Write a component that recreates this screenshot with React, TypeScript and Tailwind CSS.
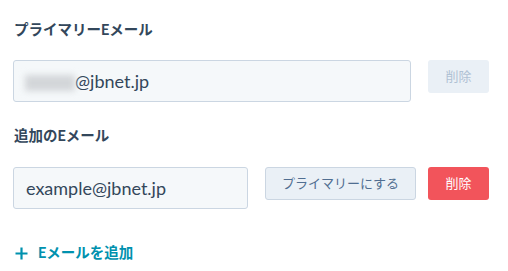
import React from "react";

const font = { fontFamily: "Lato, 'Noto Sans CJK JP', sans-serif" };

export default function App() {
  return (
    <div
      className="w-[508px] h-[271px] bg-white text-[#33475b] pl-[13px] pt-[20px]"
      style={font}
    >
      <div className="h-[20px] leading-[20px] text-[14.5px] font-bold pl-[1px]">プライマリーEメール</div>
      <div className="mt-[20px] flex items-start">
        <div className="w-[398px] h-[42px] rounded-[3px] border border-[#cbd6e2] bg-[#f5f8fa] flex items-center pl-[11px] text-[18px]">
          <span className="inline-block w-[50px] h-[16px] bg-[#d3d6d9] blur-[3px] mt-[3px]" />
          <span>@jbnet.jp</span>
        </div>
        <button className="ml-[17px] w-[61px] h-[33px] rounded-[3px] bg-[#eaf0f6] text-[#b0c1d4] text-[13px]">
          削除
        </button>
      </div>
      <div className="mt-[24px] h-[20px] leading-[20px] text-[14.5px] font-bold pl-[1px]">追加のEメール</div>
      <div className="mt-[21px] flex items-start">
        <div className="w-[235px] h-[42px] rounded-[3px] border border-[#cbd6e2] bg-[#f5f8fa] flex items-center pl-[12px] text-[18px]">
          example@jbnet.jp
        </div>
        <button className="ml-[17px] w-[151px] h-[33px] rounded-[3px] border border-[#cbd6e2] bg-[#eaf0f6] text-[#506e91] text-[13px]">
          プライマリーにする
        </button>
        <button className="ml-[12px] w-[61px] h-[33px] rounded-[3px] bg-[#f2545b] text-white text-[13px]">
          削除
        </button>
      </div>
      <div className="mt-[34px] flex items-center h-[20px] text-[#0091ae] font-bold text-[14.5px]">
        <svg width="13" height="13" viewBox="0 0 13 13" className="ml-[2px]">
          <path d="M6.5 0.5V12.5M0.5 6.5H12.5" stroke="#0091ae" strokeWidth="2.2" />
        </svg>
        <span className="ml-[10px]">Eメールを追加</span>
      </div>
    </div>
  );
}
